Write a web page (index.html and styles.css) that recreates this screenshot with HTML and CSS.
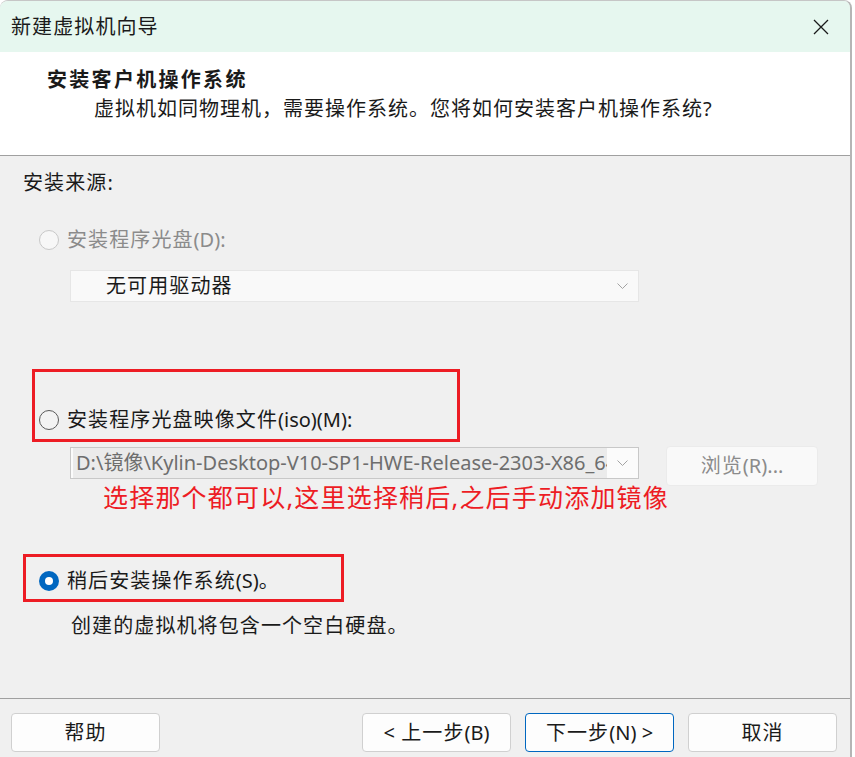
FILE: index.html
```html
<!DOCTYPE html>
<html lang="zh-CN">
<head>
<meta charset="utf-8">
<title>新建虚拟机向导</title>
<link rel="stylesheet" href="styles.css">
</head>
<body>
<div class="window">
  <div class="titlebar">
    <span class="title">新建虚拟机向导</span>
    <svg class="close" width="16" height="16" viewBox="0 0 16 16"><path d="M1 1 L15 15 M15 1 L1 15" stroke="#1a1a1a" stroke-width="1.3" fill="none"/></svg>
  </div>
  <div class="header">
    <div class="heading">安装客户机操作系统</div>
    <div class="subtitle">虚拟机如同物理机，需要操作系统。您将如何安装客户机操作系统<span class="lat">?</span></div>
  </div>
  <div class="body">
    <div class="source">安装来源<span class="lat">:</span></div>
    <div class="option option-first disabled"><span class="radio"></span><span>安装程序光盘<span class="lat">(D):</span></span></div>
    <div class="select select-drive">
      <span class="select-text">无可用驱动器</span>
      <svg class="chev" width="11" height="6" viewBox="0 0 11 6"><path d="M0.5 0.5 L5.5 5.5 L10.5 0.5" stroke="#a3a3a3" stroke-width="1" fill="none"/></svg>
    </div>
    <div class="mark mark-iso">
      <div class="option"><span class="radio"></span><span>安装程序光盘映像文件<span class="lat">(iso)(M):</span></span></div>
    </div>
    <div class="path-row">
      <div class="select select-path">
        <span class="path-text">D:\镜像\Kylin-Desktop-V10-SP1-HWE-Release-2303-X86_64.iso</span>
        <svg class="chev" width="11" height="6" viewBox="0 0 11 6"><path d="M0.5 0.5 L5.5 5.5 L10.5 0.5" stroke="#a3a3a3" stroke-width="1" fill="none"/></svg>
      </div>
      <div class="btn browse">浏览<span class="lat">(R)...</span></div>
    </div>
    <div class="note">选择那个都可以,这里选择稍后,之后手动添加镜像</div>
    <div class="mark mark-later">
      <div class="option"><span class="radio checked"></span><span>稍后安装操作系统<span class="lat">(S)</span>。</span></div>
    </div>
    <div class="desc">创建的虚拟机将包含一个空白硬盘。</div>
  </div>
  <div class="footer">
    <div class="btn">帮助</div>
    <div class="nav-group">
      <div class="btn"><span class="lat">&lt;</span>&nbsp;上一步<span class="lat">(B)</span></div>
      <div class="btn primary">下一步<span class="lat">(N) &gt;</span></div>
      <div class="btn">取消</div>
    </div>
  </div>
</div>
</body>
</html>
```
FILE: styles.css
```css
html, body {
  margin: 0;
  padding: 0;
  background: #ffffff;
}

body {
  font-family: "Noto Sans", "Noto Sans CJK SC", sans-serif;
  font-size: 20px;
  color: #1a1a1a;
}

.lat {
  letter-spacing: 0;
  font-size: 20px;
}

.window {
  width: 850px;
  height: 756px;
  border-top: 1px solid #c6c6c6;
  border-right: 2px solid #b5b5b5;
  border-top-left-radius: 8px;
  border-top-right-radius: 8px;
  overflow: hidden;
  display: flex;
  flex-direction: column;
  background: #f0f0f0;
}

.titlebar {
  height: 51px;
  flex: none;
  background: #e6f7ef;
  display: flex;
  align-items: center;
  justify-content: space-between;
  padding: 0 21px 0 11px;
}

.title {
  font-size: 20px;
  letter-spacing: 1.1px;
  line-height: 28px;
}

.close {
  display: block;
}

.header {
  height: 89px;
  flex: none;
  background: #ffffff;
  border-bottom: 1px solid #a0a0a0;
  padding: 14px 0 0 47px;
}

.heading {
  font-weight: bold;
  letter-spacing: 2.3px;
  line-height: 28px;
}

.subtitle {
  margin-top: 1px;
  padding-left: 47px;
  letter-spacing: 1px;
  line-height: 28px;
}

.body {
  height: 542px;
  flex: none;
  background: #f0f0f0;
  letter-spacing: 1.1px;
  line-height: 28px;
}

.source {
  margin-top: 13px;
  padding-left: 23px;
}

.option {
  display: flex;
  align-items: center;
  height: 28px;
}

.option-first {
  margin-top: 29px;
  padding-left: 39px;
}

.disabled {
  color: #8b8b8b;
}

.radio {
  width: 20px;
  height: 20px;
  box-sizing: border-box;
  border-radius: 50%;
  border: 1px solid #5a5a5a;
  background: #f3f3f3;
  margin-right: 8px;
  flex: none;
  position: relative;
}

.disabled .radio {
  border-color: #c8c8c8;
  background: #f7f7f7;
}

.radio.checked {
  border: none;
  background: #0067c0;
}

.radio.checked::after {
  content: "";
  position: absolute;
  left: 6px;
  top: 6px;
  width: 8px;
  height: 8px;
  border-radius: 50%;
  background: #ffffff;
}

.select {
  width: 569px;
  height: 32px;
  box-sizing: border-box;
  display: flex;
  align-items: center;
  justify-content: space-between;
  padding-right: 10px;
}

.select-drive {
  margin: 16px 0 0 70px;
  background: #f9f9f9;
  border: 1px solid #e6e6e6;
  padding-left: 35px;
}

.chev {
  display: block;
  flex: none;
}

.mark {
  border: 3px solid #ed1c24;
  box-sizing: border-box;
}

.mark-iso {
  margin: 67px 0 0 32px;
  width: 428px;
  height: 73px;
  padding: 34px 0 0 4px;
}

.path-row {
  display: flex;
  align-items: flex-start;
  margin-top: 4px;
  padding-left: 70px;
}

.select-path {
  margin-top: 1px;
  background: #fbfbfb;
  border: 1px solid #c8c8c8;
  padding-left: 2px;
}

.path-text {
  width: 534px;
  height: 30px;
  flex: none;
  background: #ebebeb;
  color: #6e6e6e;
  letter-spacing: 0;
  font-size: 20px;
  line-height: 30px;
  padding-left: 3px;
  box-sizing: border-box;
  white-space: nowrap;
  overflow: hidden;
}

.btn {
  width: 149px;
  height: 39px;
  box-sizing: border-box;
  border: 1px solid #d0d0d0;
  border-radius: 4px;
  background: #fdfdfd;
  display: flex;
  align-items: center;
  justify-content: center;
  letter-spacing: 1.1px;
  line-height: 28px;
  white-space: nowrap;
}

.browse {
  margin-left: 27px;
  width: 152px;
  height: 40px;
  border-color: #ebebeb;
  background: #f9f9f9;
  color: #8b8b8b;
}

.note {
  margin-top: -4px;
  padding-left: 103px;
  color: #ed1c24;
  font-size: 25px;
  letter-spacing: 1.2px;
  line-height: 30px;
}

.mark-later {
  margin: 42px 0 0 23px;
  width: 321px;
  height: 48px;
  padding: 10px 0 0 13px;
}

.desc {
  margin-top: 10px;
  padding-left: 71px;
}

.footer {
  flex: 1;
  border-top: 1px solid #a0a0a0;
  display: flex;
  align-items: flex-start;
  padding: 14px 13px 0 11px;
}

.nav-group {
  margin-left: auto;
  display: flex;
  gap: 14px;
}

.primary {
  border-color: #0067c0;
}
```
